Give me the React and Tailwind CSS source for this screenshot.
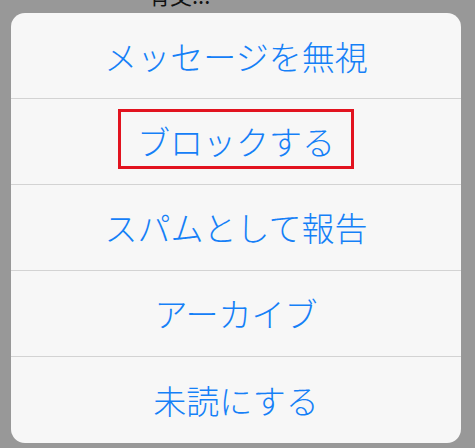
export default function App() {
  const font = { fontFamily: '"Noto Sans CJK JP", "Noto Sans", sans-serif' };
  const rowCls =
    "h-[86px] flex items-center justify-center border-b border-[#d3d3d3] text-[33px] text-[#1580f7] leading-none";
  return (
    <div className="w-[475px] h-[448px] bg-[#989898] overflow-hidden" style={font}>
      <div className="h-[13px] overflow-hidden flex justify-start pl-[148px]">
        <div className="text-[22px] leading-none text-[#111] -mt-[17px] whitespace-nowrap">有交...</div>
      </div>
      <div className="ml-[11px] w-[450px] h-[430px] bg-[#f7f7f7] rounded-[14px] overflow-hidden flex flex-col">
        <div className={rowCls + " pt-[1px]"}>
          <span className="font-light">メッセージを無視</span>
        </div>
        <div className={rowCls}>
          <div className="h-[60px] -mt-[5px] border-[3px] border-[#e2131f] px-[16px] flex items-center pt-[5px]">
            <span className="font-light">ブロックする</span>
          </div>
        </div>
        <div className={rowCls}>
          <span className="font-light">スパムとして報告</span>
        </div>
        <div className={rowCls}>
          <span className="font-light">アーカイブ</span>
        </div>
        <div className={rowCls + " border-b-0"}>
          <span className="font-light">未読にする</span>
        </div>
      </div>
    </div>
  );
}
